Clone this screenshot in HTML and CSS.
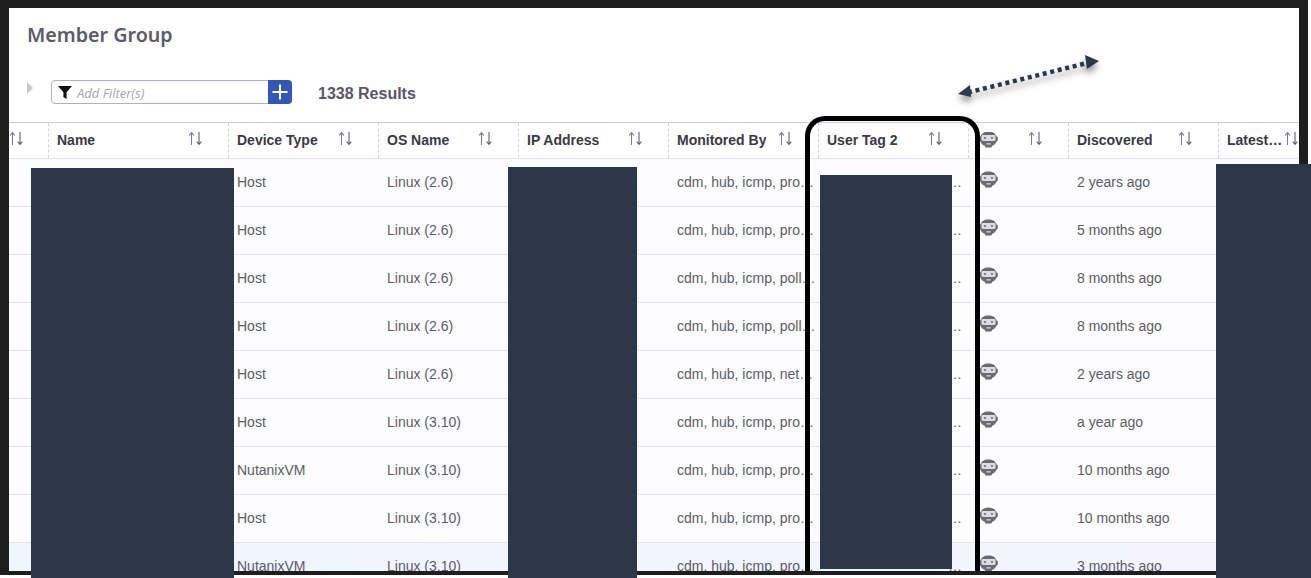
FILE: index.html
```html
<!DOCTYPE html>
<html lang="en">
<head>
<meta charset="utf-8">
<title>Member Group</title>
<link rel="stylesheet" href="styles.css">
</head>
<body>
<svg class="defs" width="0" height="0" aria-hidden="true">
  <symbol id="sort" viewBox="0 0 15 15">
    <path d="M3.500 14V2M1.200 4.400 3.500 1.600 5.800 4.400" fill="none" stroke="#7d7d8e" stroke-width="1.100"/>
    <path d="M11 1v12M8.700 10.600 11 13.400 13.300 10.600" fill="none" stroke="#62626f" stroke-width="1.100"/>
  </symbol>
  <symbol id="robot" viewBox="0 0 19 17">
    <path d="M9.500.5C13.800.5 16.600 2.600 17.300 5.200c.9.2 1.500.8 1.500 1.800v2c0 1-.6 1.600-1.500 1.800-.7 2.200-2.400 3.600-4.300 4.200l-.5 1.500h-6L6 15c-1.900-.6-3.600-2-4.300-4.200C.8 10.600.2 10 .2 9V7c0-1 .6-1.600 1.500-1.800C2.400 2.600 5.200.5 9.500.5z" fill="#6a6a72"/>
    <rect x="2.500" y="4" width="14" height="6" rx="1.400" fill="#dcdce0"/>
    <circle cx="6" cy="7" r=".9" fill="#55555e"/>
    <circle cx="13" cy="7" r=".9" fill="#55555e"/>
    <rect x="7.400" y="12.300" width="4.200" height="1.200" fill="#dcdce0"/>
  </symbol>
</svg>

<div class="stage">
  <main class="page">
    <h1 class="title">Member Group</h1>
    <div class="toolbar">
      <span class="caret"></span>
      <div class="filter">
        <svg class="funnel" viewBox="0 0 14 14" aria-hidden="true"><path d="M0 1h14L8.600 7.200V14L5.400 12V7.200z"/></svg>
        <span class="filter-text">Add Filter(s)</span>
        <span class="add"><svg viewBox="0 0 24 24" aria-hidden="true"><path d="M12 4.500v15M4.500 12h15" stroke="#fff" stroke-width="2" fill="none"/></svg></span>
      </div>
      <span class="results">1338 Results</span>
    </div>

    <div class="table">
      <div class="row head">
        <div class="th"><span class="label"></span><svg class="sort"><use href="#sort"/></svg></div>
        <div class="th"><span class="label">Name</span><svg class="sort"><use href="#sort"/></svg></div>
        <div class="th"><span class="label">Device Type</span><svg class="sort"><use href="#sort"/></svg></div>
        <div class="th"><span class="label">OS Name</span><svg class="sort"><use href="#sort"/></svg></div>
        <div class="th"><span class="label">IP Address</span><svg class="sort"><use href="#sort"/></svg></div>
        <div class="th"><span class="label">Monitored By</span><svg class="sort"><use href="#sort"/></svg></div>
        <div class="th"><span class="label">User Tag 2</span><svg class="sort"><use href="#sort"/></svg></div>
        <div class="th th-robot"><span class="label"><svg class="robot"><use href="#robot"/></svg></span><svg class="sort"><use href="#sort"/></svg></div>
        <div class="th"><span class="label">Discovered</span><svg class="sort"><use href="#sort"/></svg></div>
        <div class="th th-last"><span class="label">Latest Alert Time</span><svg class="sort"><use href="#sort"/></svg></div>
      </div>

      <div class="row"><div class="td"></div><div class="td"></div><div class="td">Host</div><div class="td">Linux (2.6)</div><div class="td"></div><div class="td">cdm, hub, icmp, processes</div><div class="td tag">…</div><div class="td td-robot"><svg class="robot"><use href="#robot"/></svg></div><div class="td">2 years ago</div><div class="td"></div></div>
      <div class="row"><div class="td"></div><div class="td"></div><div class="td">Host</div><div class="td">Linux (2.6)</div><div class="td"></div><div class="td">cdm, hub, icmp, processes</div><div class="td tag">…</div><div class="td td-robot"><svg class="robot"><use href="#robot"/></svg></div><div class="td">5 months ago</div><div class="td"></div></div>
      <div class="row"><div class="td"></div><div class="td"></div><div class="td">Host</div><div class="td">Linux (2.6)</div><div class="td"></div><div class="td">cdm, hub, icmp, pollagent</div><div class="td tag">…</div><div class="td td-robot"><svg class="robot"><use href="#robot"/></svg></div><div class="td">8 months ago</div><div class="td"></div></div>
      <div class="row"><div class="td"></div><div class="td"></div><div class="td">Host</div><div class="td">Linux (2.6)</div><div class="td"></div><div class="td">cdm, hub, icmp, pollagent</div><div class="td tag">…</div><div class="td td-robot"><svg class="robot"><use href="#robot"/></svg></div><div class="td">8 months ago</div><div class="td"></div></div>
      <div class="row"><div class="td"></div><div class="td"></div><div class="td">Host</div><div class="td">Linux (2.6)</div><div class="td"></div><div class="td">cdm, hub, icmp, netconnect</div><div class="td tag">…</div><div class="td td-robot"><svg class="robot"><use href="#robot"/></svg></div><div class="td">2 years ago</div><div class="td"></div></div>
      <div class="row"><div class="td"></div><div class="td"></div><div class="td">Host</div><div class="td">Linux (3.10)</div><div class="td"></div><div class="td">cdm, hub, icmp, processes</div><div class="td tag">…</div><div class="td td-robot"><svg class="robot"><use href="#robot"/></svg></div><div class="td">a year ago</div><div class="td"></div></div>
      <div class="row"><div class="td"></div><div class="td"></div><div class="td">NutanixVM</div><div class="td">Linux (3.10)</div><div class="td"></div><div class="td">cdm, hub, icmp, processes</div><div class="td tag">…</div><div class="td td-robot"><svg class="robot"><use href="#robot"/></svg></div><div class="td">10 months ago</div><div class="td"></div></div>
      <div class="row"><div class="td"></div><div class="td"></div><div class="td">Host</div><div class="td">Linux (3.10)</div><div class="td"></div><div class="td">cdm, hub, icmp, processes</div><div class="td tag">…</div><div class="td td-robot"><svg class="robot"><use href="#robot"/></svg></div><div class="td">10 months ago</div><div class="td"></div></div>
      <div class="row selected"><div class="td"></div><div class="td"></div><div class="td">NutanixVM</div><div class="td">Linux (3.10)</div><div class="td"></div><div class="td">cdm, hub, icmp, processes</div><div class="td tag">…</div><div class="td td-robot"><svg class="robot"><use href="#robot"/></svg></div><div class="td">3 months ago</div><div class="td"></div></div>
    </div>
  </main>

  <svg class="arrow" viewBox="0 0 160 60" aria-hidden="true">
    <path class="arrow-line" d="M18 42.500 137 13"/>
    <path class="arrow-head" d="M8 44 20 35 21 47z"/>
    <path class="arrow-head" d="M149 11 135 5 137 19z"/>
  </svg>
  <div class="highlight"></div>
  <div class="redact r1"></div>
  <div class="redact r2"></div>
  <div class="redact r3"></div>
  <div class="redact r4"></div>
</div>
</body>
</html>
```

FILE: styles.css
```css
* { box-sizing: border-box; }

html, body {
  margin: 0;
  height: 578px;
  overflow: hidden;
  background: #fff;
}

.defs { position: absolute; }

.stage {
  position: relative;
  width: 1308px;
  height: 575px;
  padding: 8px 9px 4px;
  background: #1e1e1e;
  font-family: "Liberation Sans", Arial, sans-serif;
  font-size: 14px;
  color: #5c5c64;
}

.page {
  height: 563px;
  overflow: hidden;
  background: #fff;
}

.title {
  margin: 0;
  padding: 13px 0 0 18px;
  height: 72px;
  font-family: "Noto Sans", sans-serif;
  font-size: 19.7px;
  line-height: 27px;
  font-weight: 600;
  color: #5c5c69;
}

.toolbar {
  display: flex;
  align-items: center;
  height: 24px;
  padding-left: 18px;
}

.caret {
  width: 0;
  height: 0;
  margin: -8px 18px 0 0;
  border-left: 6px solid #c9c9cf;
  border-top: 6px solid transparent;
  border-bottom: 6px solid transparent;
}

.filter {
  display: flex;
  align-items: center;
  width: 241px;
  height: 24px;
  padding-left: 6px;
  border: 1px solid #b3afcb;
  border-radius: 4px;
}

.funnel {
  width: 14px;
  height: 14px;
  fill: #111;
}

.filter-text {
  flex: 1;
  margin: 2px 0 0 5px;
  font-family: "Open Sans", sans-serif;
  font-style: italic;
  font-size: 13px;
  color: #a5a5b4;
}

.add {
  display: flex;
  width: 24px;
  height: 24px;
  margin: -1px -1px -1px 0;
  border-radius: 0 4px 4px 0;
  background: #3557b7;
}

.results {
  margin: 4px 0 0 26px;
  font-size: 16px;
  font-weight: 700;
  color: #5a5668;
}

.table { margin-top: 18px; }

.row {
  display: grid;
  grid-template-columns: 39px 180px 150px 140px 150px 150px 150px 100px 150px 81px;
  height: 48px;
  border-top: 1px solid #e5e3ef;
  background: #fdfcff;
}

.row.head {
  height: 36px;
  border-top: 1px solid #cfccdf;
  background: #fff;
}

.row.selected {
  background: linear-gradient(90deg, #f0f5fe, #f5f4fe);
}

.th {
  display: flex;
  align-items: center;
  justify-content: space-between;
  padding: 0 25px 2px 8px;
  border-left: 1px dashed #d5d3e2;
  font-weight: 700;
  color: #3a3a44;
}

.th:first-child {
  padding-left: 0;
  border-left: 0;
}

.th-robot { padding-left: 10px; }

.th-last {
  padding-right: 0;
  gap: 1px;
}

.label {
  display: block;
  min-width: 0;
  overflow: hidden;
  white-space: nowrap;
  text-overflow: ellipsis;
}

.sort {
  flex: none;
  width: 15px;
  height: 15px;
  margin-top: -3px;
}

.td {
  min-width: 0;
  padding: 0 1px 0 9px;
  overflow: hidden;
  white-space: nowrap;
  line-height: 47px;
  text-overflow: ellipsis;
}

.tag {
  padding-right: 6px;
  text-align: right;
}

.td-robot {
  padding: 0 0 0 11px;
  line-height: 0;
}

.robot {
  width: 19px;
  height: 17px;
}

.td-robot .robot { margin-top: 12px; }

.label .robot {
  display: block;
  margin-top: -1px;
}

.arrow {
  position: absolute;
  left: 950px;
  top: 50px;
  width: 160px;
  height: 60px;
  overflow: visible;
  filter: drop-shadow(0 5px 3px rgba(40, 40, 50, 0.5));
}

.arrow-line {
  fill: none;
  stroke: #2c3749;
  stroke-width: 4.5;
  stroke-dasharray: 4 3.7;
}

.arrow-head { fill: #2c3749; }

.highlight {
  position: absolute;
  left: 805px;
  top: 116px;
  width: 175px;
  height: 455px;
  border: 5px solid #000;
  border-bottom: 0;
  border-radius: 20px 20px 0 0;
}

.redact {
  position: absolute;
  background: #2c3749;
}

.r1 { left: 31px; top: 168px; width: 203px; height: 410px; }
.r2 { left: 508px; top: 167px; width: 129px; height: 411px; }
.r3 { left: 820px; top: 175px; width: 132px; height: 394px; }
.r4 { left: 1216px; top: 164px; width: 95px; height: 414px; }
```
